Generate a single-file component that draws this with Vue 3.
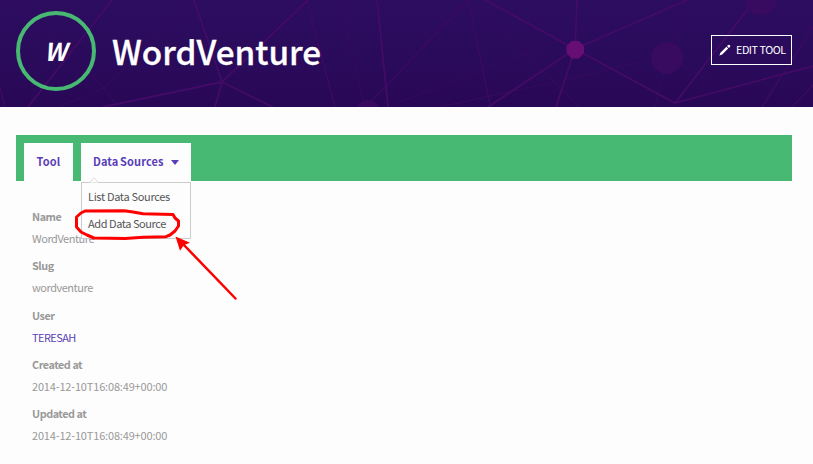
<script setup>
const fields = [
  { label: 'Name', value: 'WordVenture' },
  { label: 'Slug', value: 'wordventure' },
  { label: 'User', value: 'TERESAH', link: true },
  { label: 'Created at', value: '2014-12-10T16:08:49+00:00', wide: true },
  { label: 'Updated at', value: '2014-12-10T16:08:49+00:00', wide: true },
]
</script>

<template>
  <div class="page">
    <header class="hero">
      <svg class="network" viewBox="0 0 813 107" aria-hidden="true">
        <g class="faint">
          <path d="M12 0L104 88L58 107M104 88L116 104M104 88L197 0M340 0L363 100M468 0L580 107M400 102L610 20M440 107L610 70M610 68L667 58L686 0M667 58L655 107M667 58L740 95" />
        </g>
        <g class="medium">
          <path d="M307 1L335 107M468 0L490 104M467 1L366 107M813 27L762 107M813 85L792 107M0 88L5 107" />
        </g>
        <g class="strong">
          <path d="M112 0L28 107M103 107L222 82L194 0M222 82L308 0M222 82L215 107M222 82L273 107M377 0L388 107M478 -4L575 49L577 0M575 49L687 0M575 49L675 103L755 0M575 49L488 107M575 49L556 107M675 103L813 66" />
        </g>
        <circle class="blob" cx="667" cy="58" r="16" />
        <circle class="blob" cx="761" cy="-1" r="16" />
        <circle class="blob" cx="368" cy="112" r="12" />
        <path class="node" d="M571.5 41H579L584 46V53L579 58.5H571.5L566.5 53V46Z" />
      </svg>
      <div class="avatar"><span>W</span></div>
      <h1>WordVenture</h1>
      <a class="edit">
        <svg class="pencil" viewBox="0 0 12 12" aria-hidden="true">
          <path d="M.4 11.6L1.4 8.7L7.4 2.8L9.2 4.6L3.2 10.6ZM8 2.1L9.3.9Q9.8.4 10.4.9L11.1 1.6Q11.6 2.2 11.1 2.7L9.9 3.9Z" />
        </svg>
        <span>EDIT TOOL</span>
      </a>
    </header>

    <main>
      <nav class="tabs">
        <a class="tab"><span class="tool">Tool</span></a>
        <div class="tab sources">
          <span class="title">Data Sources</span>
          <i class="caret"></i>
          <div class="menu">
            <svg class="notch" viewBox="0 0 10 6" aria-hidden="true"><path d="M.5 5.5L5 .8L9.5 5.5" /></svg>
            <a><span>List Data Sources</span></a>
            <a class="add"><span>Add Data Source</span></a>
          </div>
        </div>
      </nav>
      <dl>
        <div v-for="f in fields" :key="f.label" class="field">
          <dt>{{ f.label }}</dt>
          <dd :class="{ link: f.link, stamp: f.wide }">{{ f.value }}</dd>
        </div>
      </dl>
    </main>

    <svg class="annotation" viewBox="0 0 813 464" aria-hidden="true">
      <path class="ink" d="M76.5 217L81 213L85 211L124 210.8L133 212L143 213.8L173 214.5L175 218L178.5 221V226L175 231L170 235L166 236.7L143 237.3L125 238.5L94 238L87 235L81 232L76.5 227Z" />
      <path class="ink shaft" d="M182.5 243.5L235.5 298.5" />
      <path class="head" d="M175.5 236.5L190 242.8L184 245L180 250.7Z" />
    </svg>
  </div>
</template>

<style>
body { background: #fdfdfd; }
</style>

<style scoped>
.page {
  position: relative;
  height: 464px;
  overflow: hidden;
  font-family: "Noto Sans CJK SC", "Noto Sans", sans-serif;
  font-size: 11px;
  color: #999;
}
.hero {
  position: relative;
  box-sizing: border-box;
  height: 107px;
  padding: 0 21px 0 16px;
  display: flex;
  align-items: center;
  background: linear-gradient(#2d0d60, #280856);
  color: #fff;
}
.network {
  position: absolute;
  inset: 0;
  width: 813px;
  height: 107px;
  fill: none;
}
.faint { stroke: #3a0b60; stroke-width: 1.3; opacity: .6; }
.medium { stroke: #3b0a62; stroke-width: 1.5; }
.strong { stroke: #430b67; stroke-width: 1.8; }
.blob { fill: #390b60; }
.node { fill: #660e73; }
.avatar {
  position: relative;
  box-sizing: border-box;
  width: 80px;
  height: 80px;
  margin-top: -5px;
  padding: 0 1px 0 0;
  border: 4px solid #48b973;
  border-radius: 50%;
  display: flex;
  align-items: center;
  justify-content: center;
  font-size: 24.5px;
  line-height: 30px;
  font-weight: 700;
  font-style: italic;
}
h1 {
  position: relative;
  margin: -5px 0 0 16px;
  font-size: 33.3px;
  line-height: 44px;
  font-weight: 500;
  -webkit-text-stroke: .3px #fff;
}
.edit {
  position: relative;
  box-sizing: border-box;
  width: 81px;
  height: 30px;
  margin: -7px 0 0 auto;
  padding: 0 0 1px 7px;
  border: 1px solid #fff;
  display: flex;
  align-items: center;
  font-size: 10.8px;
  letter-spacing: -.46px;
  line-height: 15px;
  white-space: nowrap;
}
.pencil { width: 12px; height: 12px; margin-right: 5px; fill: #fff; }
main { padding: 28px 21px 0 16px; }
.tabs {
  box-sizing: border-box;
  height: 46px;
  padding: 8px 8px 0;
  display: flex;
  gap: 8px;
  background: #48b973;
}
.tab {
  position: relative;
  box-sizing: border-box;
  width: 49px;
  height: 38px;
  padding-bottom: 1px;
  display: flex;
  align-items: center;
  justify-content: center;
  background: #fdfdfd;
  color: #5a3db8;
  font-weight: 700;
  line-height: 15px;
  white-space: nowrap;
}
.tool { letter-spacing: .2px; }
.title { letter-spacing: .1px; word-spacing: -.9px; }
.sources { width: 110px; justify-content: flex-start; padding-left: 12px; }
.caret {
  margin: 1px 0 0 7px;
  border: 4.5px solid transparent;
  border-top: 5px solid #5a3db8;
  border-bottom: 0;
}
.menu {
  position: absolute;
  left: 0;
  top: 39px;
  box-sizing: border-box;
  width: 110px;
  height: 57px;
  border: 1px solid #ccc;
  background: #fdfdfd;
  color: #555;
  font-weight: 400;
  line-height: 16px;
  letter-spacing: -.32px;
}
.menu a { display: block; padding: 5px 6px 6px; height: 16px; }
.menu .add { letter-spacing: -.44px; }
.notch {
  position: absolute;
  left: 7px;
  top: -6px;
  width: 10px;
  height: 6px;
  fill: #fdfdfd;
  stroke: #ddd;
}
dl { margin: 0; padding: 27px 16px 0; }
.field { height: 49.25px; }
dt, dd { margin: 0; height: 16px; line-height: 16px; }
dt { font-size: 10.8px; font-weight: 700; margin-bottom: 6px; letter-spacing: -.45px; }
dd { letter-spacing: -.47px; }
.stamp { letter-spacing: -.17px; }
.link { color: #5a3db8; letter-spacing: -.57px; }
.annotation { position: absolute; inset: 0; width: 813px; height: 464px; pointer-events: none; }
.ink { fill: none; stroke: #fe0000; stroke-width: 3; stroke-linejoin: round; stroke-linecap: round; }
.shaft { stroke-width: 2.5; }
.head { fill: #fe0000; }
</style>
